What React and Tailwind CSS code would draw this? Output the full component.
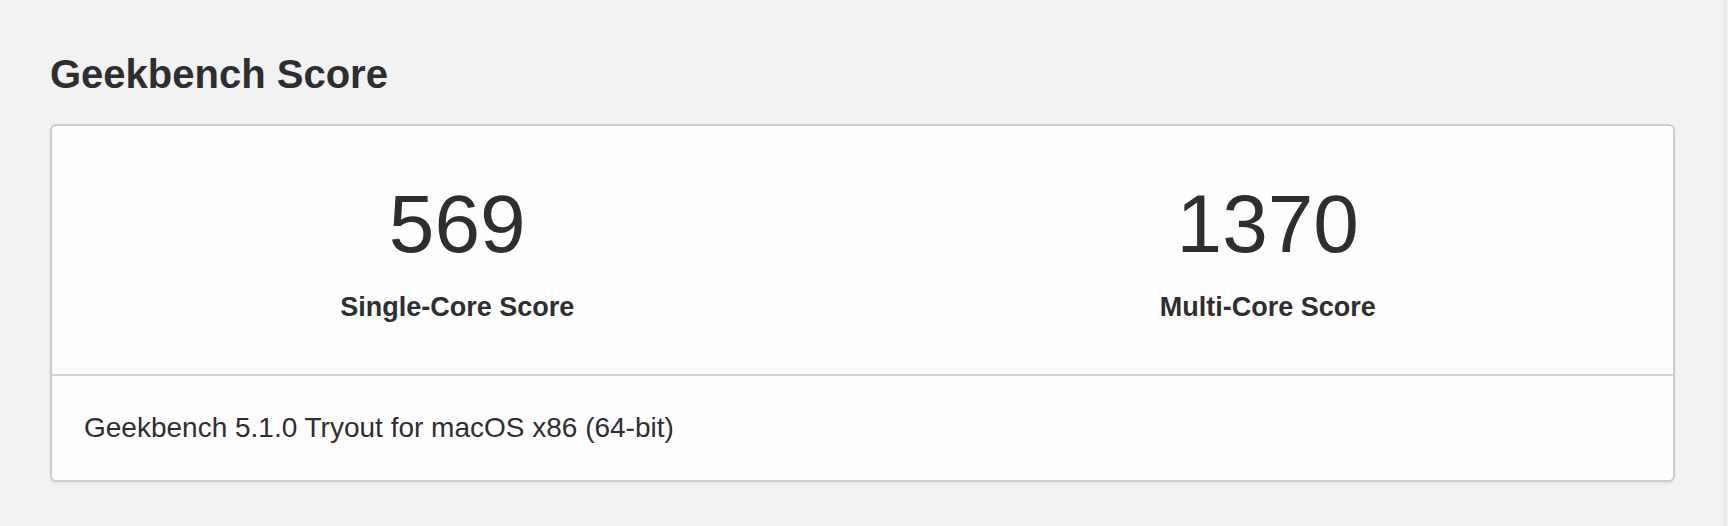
import React from "react";

const scores = [
  { value: "569", label: "Single-Core Score" },
  { value: "1370", label: "Multi-Core Score" },
];

function ScoreCell({ value, label }) {
  return (
    <div className="flex flex-col items-center">
      <div className="text-[82px] leading-[96px] font-normal">{value}</div>
      <div className="mt-[19px] text-[27px] leading-[32px] font-bold">{label}</div>
    </div>
  );
}

export default function App() {
  return (
    <div className="min-h-[526px] w-full bg-[#f2f2f2] font-['Liberation_Sans',Arial,sans-serif] text-[#2e2e30]">
      <div className="w-[1726px] min-h-[526px] border-r-2 border-[#e6e6e6] pl-[50px] pr-[49px] pt-[52px]">
        <h1 className="text-[40px] leading-[44px] font-bold">Geekbench Score</h1>

        <div className="mt-[28px] rounded-[6px] border-2 border-[#cbcbcb] bg-[#fefefe] shadow-[0_2px_3px_rgba(0,0,0,0.06)]">
          <div className="grid grid-cols-2 pt-[50px] pb-[51px]">
            {scores.map((s) => (
              <ScoreCell key={s.label} value={s.value} label={s.label} />
            ))}
          </div>
          <div className="border-t-2 border-[#d4d4d4] px-[32px] py-[36px] text-[28px] leading-[32px]">
            Geekbench 5.1.0 Tryout for macOS x86 (64-bit)
          </div>
        </div>
      </div>
    </div>
  );
}
